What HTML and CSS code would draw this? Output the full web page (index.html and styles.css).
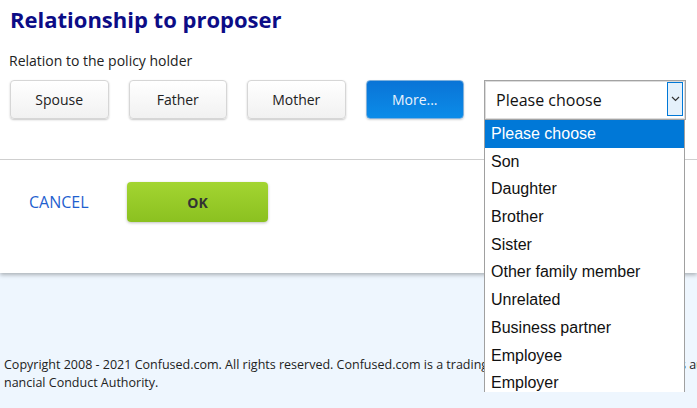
FILE: index.html
```html
<!DOCTYPE html>
<html>
<head>
<meta charset="utf-8">
<link rel="stylesheet" href="styles.css">
</head>
<body>
<div class="panel">
  <h1 class="title">Relationship to proposer</h1>
  <div class="label">Relation to the policy holder</div>
  <div class="options">
    <button class="opt">Spouse</button>
    <button class="opt">Father</button>
    <button class="opt">Mother</button>
    <button class="opt opt-active">More...</button>
    <div class="select-wrap">
      <div class="select">
        <span class="select-text">Please choose</span>
        <span class="select-arrow">
          <svg width="9" height="6" viewBox="0 0 9 6"><path d="M1 1 L4.5 4.5 L8 1" fill="none" stroke="#333" stroke-width="1.2"/></svg>
        </span>
      </div>
      <ul class="list">
        <li class="item item-sel">Please choose</li>
        <li class="item">Son</li>
        <li class="item">Daughter</li>
        <li class="item">Brother</li>
        <li class="item">Sister</li>
        <li class="item">Other family member</li>
        <li class="item">Unrelated</li>
        <li class="item">Business partner</li>
        <li class="item">Employee</li>
        <li class="item">Employer</li>
      </ul>
    </div>
  </div>
  <div class="rule"></div>
  <div class="actions">
    <a class="cancel">CANCEL</a>
    <button class="ok">OK</button>
  </div>
</div>
<div class="footer">
  <div class="fline">Copyright 2008 - 2021 Confused.com. All rights reserved. Confused.com is a trading name of Inspop.com Ltd, which is authorised and regulated by the</div>
  <div class="fline">nancial Conduct Authority.</div>
</div>
</body>
</html>
```
FILE: styles.css
```css
html, body {
  margin: 0;
  padding: 0;
}
body {
  background: #eef6fe;
  font-family: "Open Sans", "Noto Sans", sans-serif;
  color: #222;
  overflow: hidden;
}
.panel {
  background: #fff;
  box-shadow: 0 2px 4px rgba(0, 0, 0, 0.28);
  padding: 4px 0 51px 0;
  position: relative;
  z-index: 1;
}
.title {
  margin: 0 0 18px 10px;
  font-size: 22px;
  line-height: 30px;
  font-weight: 700;
  color: #0c0c86;
}
.label {
  margin-left: 9px;
  font-size: 14px;
  line-height: 18px;
  color: #222;
  margin-bottom: 10px;
}
.options {
  display: flex;
  gap: 20px;
  padding-left: 10px;
  align-items: flex-start;
}
.opt {
  width: 98.5px;
  height: 39px;
  border: 1px solid #d6d6d6;
  border-radius: 4px;
  background: linear-gradient(#ffffff, #f1f1f1);
  box-shadow: 0 1px 2px rgba(0, 0, 0, 0.22);
  font-family: "Open Sans", sans-serif;
  font-size: 14px;
  color: #222;
  padding: 0;
}
.opt-active {
  background: linear-gradient(#0a74d6, #0b8ce9);
  border-color: #7fb1dd;
  color: #eaf3fc;
  box-shadow: 0 1px 2px rgba(0, 0, 0, 0.18);
}
.select-wrap {
  position: relative;
}
.select {
  width: 202px;
  height: 40px;
  box-sizing: border-box;
  border: 1px solid #a3a3a3;
  box-shadow: inset 0 0 0 1px #dcdcdc;
  display: flex;
  align-items: center;
  position: relative;
  background: #fff;
}
.select-text {
  font-size: 16px;
  padding-left: 11px;
  color: #111;
}
.select-arrow {
  position: absolute;
  right: 2px;
  top: 1px;
  bottom: 3px;
  width: 16px;
  box-sizing: border-box;
  background: #e5f1fb;
  border: 1px solid #0078d7;
  display: flex;
  align-items: center;
  justify-content: center;
}
.list {
  position: absolute;
  left: 0;
  top: 40px;
  width: 201px;
  box-sizing: border-box;
  margin: 0;
  padding: 0;
  list-style: none;
  background: #fff;
  border: 1px solid #a0a0a0;
  border-top: none;
  z-index: 5;
}
.item {
  font-family: "Liberation Sans", Arial, sans-serif;
  font-size: 16px;
  height: 27.7px;
  line-height: 27.7px;
  padding-left: 6px;
  color: #111;
}
.item-sel {
  background: #0078d7;
  color: #fff;
}
.rule {
  height: 1px;
  background: #cfcfcf;
  margin-top: 39px;
}
.actions {
  display: flex;
  align-items: center;
  padding-left: 29px;
  margin-top: 22px;
}
.cancel {
  font-size: 16px;
  color: #1f5fcf;
  width: 98px;
  line-height: 20px;
  margin-top: -1px;
}
.ok {
  width: 141px;
  height: 40px;
  border: none;
  border-radius: 4px;
  background: linear-gradient(#a3d531, #8bc120);
  box-shadow: 0 1px 3px rgba(0, 0, 0, 0.25);
  font-family: "Open Sans", sans-serif;
  font-weight: 700;
  font-size: 14px;
  color: #333;
  padding: 0;
}
.footer {
  padding: 83px 0 0 4px;
}
.fline {
  font-size: 12.5px;
  line-height: 18px;
  white-space: nowrap;
  color: #222;
}
```
